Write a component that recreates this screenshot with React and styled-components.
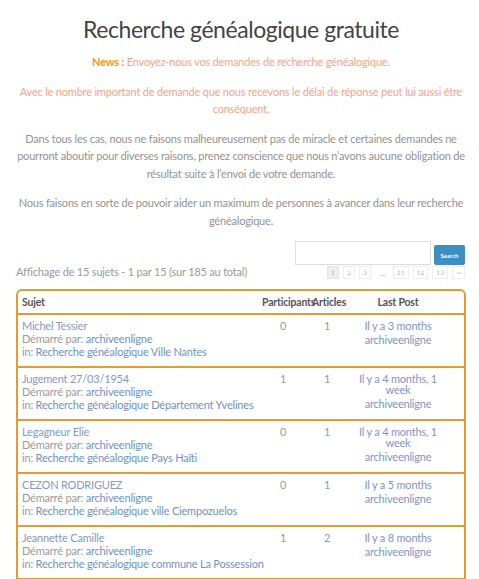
import React from "react";
import styled, { createGlobalStyle } from "styled-components";

const GlobalStyle = createGlobalStyle`
  html, body {
    margin: 0;
    padding: 0;
    background: #fff;
  }
  body {
    font-family: Lato, "Open Sans", sans-serif;
    color: #888;
  }
`;

const topics = [
  {
    title: "Michel Tessier",
    forum: "Recherche généalogique Ville Nantes",
    participants: 0,
    articles: 1,
    when: "Il y a 3 months",
  },
  {
    title: "Jugement 27/03/1954",
    forum: "Recherche généalogique Département Yvelines",
    participants: 1,
    articles: 1,
    when: "Il y a 4 months, 1 week",
  },
  {
    title: "Legagneur Elie",
    forum: "Recherche généalogique Pays Haïti",
    participants: 0,
    articles: 1,
    when: "Il y a 4 months, 1 week",
  },
  {
    title: "CEZON RODRIGUEZ",
    forum: "Recherche généalogique ville Ciempozuelos",
    participants: 0,
    articles: 1,
    when: "Il y a 5 months",
  },
  {
    title: "Jeannette Camille",
    forum: "Recherche généalogique commune La Possession",
    participants: 1,
    articles: 2,
    when: "Il y a 8 months",
  },
];

const pages = ["1", "2", "3", "…", "11", "12", "13", "→"];

function App() {
  return (
    <>
      <GlobalStyle />
      <Page>
        <Title>Recherche généalogique gratuite</Title>
        <Para>
          <News>News :</News> <Salmon>Envoyez-nous vos demandes de recherche généalogique.</Salmon>
        </Para>
        <Para>
          <Salmon>
            Avec le nombre important de demande que nous recevons le délai de réponse peut lui aussi être
            conséquent.
          </Salmon>
        </Para>
        <Para>
          Dans tous les cas, nous ne faisons malheureusement pas de miracle et certaines demandes ne
          pourront aboutir pour diverses raisons, prenez conscience que nous n’avons aucune obligation de
          résultat suite à l’envoi de votre demande.
        </Para>
        <Para>
          Nous faisons en sorte de pouvoir aider un maximum de personnes à avancer dans leur recherche
          généalogique.
        </Para>

        <SearchRow>
          <SearchInput type="text" />
          <SearchButton>Search</SearchButton>
        </SearchRow>

        <InfoRow>
          <Count>Affichage de 15 sujets - 1 par 15 (sur 185 au total)</Count>
          <Pager>
            {pages.map((p) =>
              p === "…" ? (
                <Dots key={p}>…</Dots>
              ) : (
                <PageBox key={p} $current={p === "1"}>
                  {p}
                </PageBox>
              )
            )}
          </Pager>
        </InfoRow>

        <Table>
          <HeadRow>
            <HeadCell>Sujet</HeadCell>
            <HeadCell>Participants</HeadCell>
            <HeadCell>Articles</HeadCell>
            <HeadCell $center>Last Post</HeadCell>
          </HeadRow>
          {topics.map((t) => (
            <Row key={t.title}>
              <SubjectCell>
                <TopicLink>{t.title}</TopicLink>
                <Meta>
                  Démarré par: <Link>archiveenligne</Link>
                </Meta>
                <Meta>
                  in: <Link>{t.forum}</Link>
                </Meta>
              </SubjectCell>
              <NumCell>{t.participants}</NumCell>
              <NumCell>{t.articles}</NumCell>
              <LastCell>
                <When>{t.when}</When>
                <Author>archiveenligne</Author>
              </LastCell>
            </Row>
          ))}
        </Table>
      </Page>
    </>
  );
}

const Page = styled.div`
  width: 450px;
  padding: 12px 13px 0 16px;
  font-size: 11px;
  letter-spacing: -0.2px;
`;

const Title = styled.h1`
  margin: 0 0 7px;
  text-align: center;
  font-size: 23px;
  letter-spacing: -0.45px;
  line-height: 34px;
  font-weight: 400;
  color: #444;
`;

const Para = styled.p`
  margin: 0 0 12px;
  text-align: center;
  line-height: 17.5px;
  color: #939393;
`;

const News = styled.strong`
  color: #f7931e;
  font-weight: 700;
`;

const Salmon = styled.span`
  color: #f8a48a;
`;

const SearchRow = styled.div`
  display: flex;
  justify-content: flex-end;
  align-items: flex-end;
  gap: 3px;
  padding-right: 1px;
`;

const SearchInput = styled.input`
  width: 136px;
  height: 24px;
  box-sizing: border-box;
  border: 1px solid #ddd;
  margin: 0;
  padding: 0 4px;
`;

const SearchButton = styled.button`
  width: 31px;
  height: 20px;
  padding: 0;
  border: none;
  border-radius: 2px;
  background: #3d8fc3;
  color: #fff;
  font-family: inherit;
  font-size: 6px;
  font-weight: 700;
  letter-spacing: 0;
`;

const InfoRow = styled.div`
  display: flex;
  justify-content: space-between;
  align-items: flex-start;
  margin-top: 1px;
  padding-right: 1px;
`;

const Count = styled.div`
  color: #999;
  line-height: 14px;
  margin-top: -1px;
`;

const Pager = styled.div`
  display: flex;
  gap: 4px;
  align-items: center;
`;

const PageBox = styled.span`
  min-width: 12px;
  height: 13px;
  box-sizing: border-box;
  padding: 0 3px;
  border: 1px solid ${(p) => (p.$current ? "#e4e4e4" : "#eee")};
  background: ${(p) => (p.$current ? "#eee" : "#fff")};
  color: #aaa;
  font-size: 6px;
  letter-spacing: 0;
  line-height: 11px;
  text-align: center;
  font-family: "DejaVu Serif", serif;
`;

const Dots = styled.span`
  width: 14px;
  text-align: center;
  color: #aaa;
  font-size: 8px;
`;

const Table = styled.div`
  margin-top: 10px;
  border: 2px solid #e39b33;
  border-radius: 6px 6px 0 0;
`;

const cols = "240px 50px 38px 1fr";

const HeadRow = styled.div`
  display: grid;
  grid-template-columns: ${cols};
  height: 22px;
  align-items: center;
  border-bottom: 2px solid #e39b33;
`;

const HeadCell = styled.div`
  padding: 0 ${(p) => (p.$center ? "14px" : "0")} 0 ${(p) => (p.$center ? "0" : "4px")};
  text-align: ${(p) => (p.$center ? "center" : "left")};
  font-weight: 700;
  color: #555;
  white-space: nowrap;
  font-size: 10.5px;
`;

const Row = styled.div`
  display: grid;
  grid-template-columns: ${cols};
  height: 51px;
  box-sizing: content-box;
  border-bottom: 2px solid #e39b33;
`;

const SubjectCell = styled.div`
  display: flex;
  flex-direction: column;
  padding: 4px 0 0 4px;
  line-height: 13px;
  white-space: nowrap;
`;

const Link = styled.span`
  color: #7090d4;
`;

const TopicLink = styled.span`
  color: #8499c6;
`;

const Meta = styled.span`
  color: #9a9a9a;
`;

const NumCell = styled.div`
  padding-top: 4px;
  text-align: center;
  line-height: 13px;
  color: #999;
`;

const LastCell = styled.div`
  padding: 4px 14px 0 0;
  text-align: center;
`;

const When = styled.div`
  color: #7d95cf;
  line-height: 11px;
  padding-top: 1px;
  margin: 0 10px;
`;

const Author = styled.div`
  color: #7d95cf;
  line-height: 13px;
  margin-top: 2px;
`;

export default App;
